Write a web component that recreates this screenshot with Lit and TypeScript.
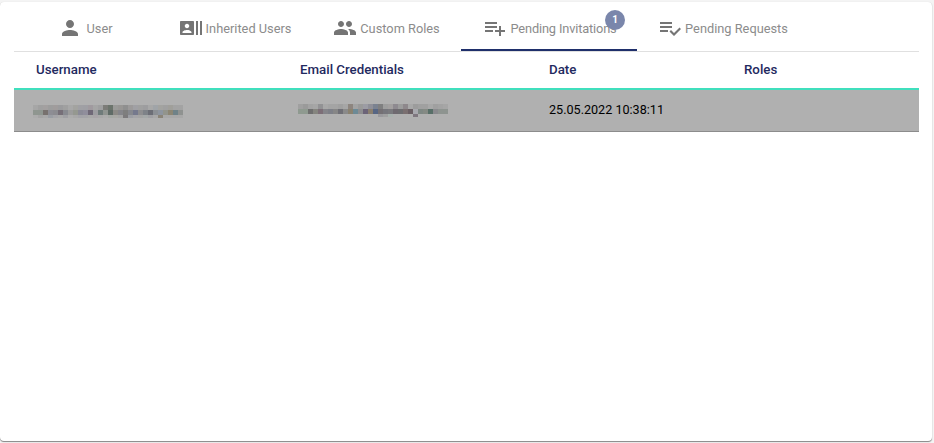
import { LitElement, html, css, svg } from "lit";
import { customElement } from "lit/decorators.js";

const ICONS: Record<string, string> = {
  person: "M12 12c2.21 0 4-1.79 4-4s-1.79-4-4-4-4 1.79-4 4 1.79 4 4 4zm0 2c-2.67 0-8 1.34-8 4v2h16v-2c0-2.66-5.33-4-8-4z",
  actors: "M21 5v14h2V5h-2zm-4 14h2V5h-2v14zM14 5H2c-.55 0-1 .45-1 1v12c0 .55.45 1 1 1h12c.55 0 1-.45 1-1V6c0-.55-.45-1-1-1zM8 7.75c1.24 0 2.25 1.01 2.25 2.25S9.24 12.25 8 12.25 5.75 11.24 5.75 10 6.76 7.75 8 7.75zM12.5 17h-9v-.75c0-1.5 3-2.25 4.5-2.25s4.5.75 4.5 2.25V17z",
  people: "M16 11c1.66 0 2.99-1.34 2.99-3S17.66 5 16 5c-1.66 0-3 1.34-3 3s1.34 3 3 3zm-8 0c1.66 0 2.99-1.34 2.99-3S9.66 5 8 5C6.34 5 5 6.34 5 8s1.34 3 3 3zm0 2c-2.33 0-7 1.17-7 3.5V19h14v-2.5c0-2.33-4.67-3.5-7-3.5zm8 0c-.29 0-.62.02-.97.05 1.16.84 1.97 1.97 1.97 3.45V19h6v-2.5c0-2.33-4.67-3.5-7-3.5z",
  add: "M14 10H2v2h12v-2zm0-4H2v2h12V6zm4 8v-4h-2v4h-4v2h4v4h2v-4h4v-2h-4zM2 16h8v-2H2v2z",
  check: "M14 10H2v2h12v-2zm0-4H2v2h12V6zM2 16h8v-2H2v2zm19.5-4.5L23 13l-6.99 7-4.51-4.5L13 14l3.01 3 5.49-5.5z",
};

const TABS = [
  { icon: "person", label: "User", cls: "t-user" },
  { icon: "actors", label: "Inherited Users", cls: "t-inh" },
  { icon: "people", label: "Custom Roles", cls: "t-cus" },
  { icon: "add", label: "Pending Invitations", cls: "t-inv", active: true, badge: "1" },
  { icon: "check", label: "Pending Requests", cls: "t-req" },
];

const NAME_BLUR = [
  "a6a6a6 a0a0a0 a3a0a0 9d9d9d a09c9c 9b9b9d a0a0a0 a8a8a8 a3a3a0 a0a0a4 9f9fa4 a09a9f a5a5a5 9f9fa0 7c7c78 6c746c 9a9a98 989694 8f8f8f 9c9a9a a0a0a4 a0a0a0 9d9d9f a8a8a8 a0a4a8 a3a3a0 a0a0a0 a09f9a a3a3a3 a3a3a3",
  "8f9690 8f9690 77716e 8d8d94 8b8b90 766f78 888a90 9c9c9c 959890 8b8b97 908e9c 6f6877 9c9ca0 6f7b7a 8f9490 5f6b66 8c8a86 85858a 7e7e7e 86888e 75798d 8e8e90 7e8288 6c6e76 8b8f94 8e959f 92948c 8c8674 6f8288 8f9290",
  "acacac a4a4a4 a8a8a8 9a9ea4 a4a4a8 a8a8a8 a0a0a4 acacac a8a8a8 a3a3a8 a4a4a8 a8a8a8 a8a4a8 a8a8a8 acacac a4a8a4 a8a8a4 a4a4a4 7c7a7c 9c9ea4 a4a4a8 a4a4a4 a4a8a8 a0a0a4 a8a8a8 8a8478 a8a8a8 a8a8a8 a8a8a8 a8a8a8",
];
const MAIL_BLUR = [
  "a0a0a0 9a9a9a a3a3a3 a6a6a6 929294 a8a8a8 a4a4a4 a4a4a4 a0a0a0 a6a6a6 8d857f a3a3a3 9a9a9a 9c9ca4 8f8f98 7b8290 7f7f80 9e9e9e a3a0a0 8e8a90 9c9c9c 8e888c a8a8a8 9c9c9c a0a0a0 a0a0a0 a8a8a8 a0a0a0 a3a3a3 a6a6a6",
  "8f9a90 8f9a90 6f6f6f 85857f 7d6f78 85858a 7e8088 868686 6f6f76 8a8a8a 8a8270 6d8a96 8e8e90 6c6478 8a7f6f 576684 747074 76767c 7a7a7e 6f6a70 6d6d70 7a6f70 6a5f64 a8a8ae 7f8884 858a84 586f68 8a8a8e 8e9490 8e9490",
  "- - - - - - - - - - - - - - - - 9a9a9e a0a0a0 a8b2ae - - - - 7f777f - - - - - -",
];

@customElement("app-root")
export class AppRoot extends LitElement {
  static styles = css`
    :host {
      display: block;
      width: 934px;
      height: 443px;
      background: #f4f4f4;
      box-sizing: border-box;
      padding: 2px 2px 2px 0;
      font-family: Roboto, "Liberation Sans", sans-serif;
      overflow: hidden;
    }
    .card {
      height: 439px;
      box-sizing: border-box;
      background: #fff;
      border-radius: 4px;
      padding: 0 13px 0 14px;
      box-shadow: 0 1px 1px rgba(0, 0, 0, 0.45), 0 0 1px rgba(0, 0, 0, 0.12);
    }
    .tabs {
      display: flex;
      height: 50px;
      box-sizing: border-box;
      border-bottom: 1px solid #e0e0e0;
    }
    .tab {
      position: relative;
      display: flex;
      align-items: center;
      justify-content: center;
      gap: 3px;
      height: 49px;
      box-sizing: border-box;
      padding-top: 3px;
      color: #8c8c8c;
      font-size: 12.8px;
      white-space: nowrap;
    }
    .tab svg {
      width: 24px;
      height: 24px;
      fill: #757575;
      flex: none;
    }
    .t-user { width: 144px; gap: 4px; padding-right: 1px; }
    .t-inh { width: 154px; }
    .t-cus { width: 149px; }
    .t-inv { width: 176px; padding-left: 2px; letter-spacing: -0.15px; }
    .t-req { width: 176px; padding-right: 4px; }
    .active {
      border-bottom: 2px solid #1f2f6b;
      padding-top: 5px;
    }
    .badge {
      position: absolute;
      top: 8px;
      left: 144px;
      width: 20px;
      height: 20px;
      box-sizing: border-box;
      padding-bottom: 1px;
      border-radius: 50%;
      background: #7a86ab;
      color: #fff;
      font-size: 10px;
      font-weight: 700;
      display: flex;
      align-items: center;
      justify-content: center;
    }
    .grid {
      display: grid;
      grid-template-columns: 264px 249px 195px 1fr;
      align-items: center;
      box-sizing: border-box;
      padding-left: 22px;
    }
    .head {
      height: 38px;
      padding-bottom: 2px;
      border-bottom: 2px solid #40dfbd;
      color: #1f2a60;
      font-size: 13.3px;
      font-weight: 500;
    }
    .row {
      height: 42px;
      background: #b0b0b0;
      border-bottom: 1px solid #8c8c8c;
      color: #000;
      font-size: 12.6px;
      padding-bottom: 2px;
    }
    .blur {
      display: block;
      margin: 11px 0 0 -3px;
      width: 150px;
      height: 20px;
    }
    .blur.mail {
      margin: 9px 0 0 -2px;
    }
  `;

  private blur(rows: string[], cls: string) {
    const cells = rows.flatMap((r, y) =>
      r.split(" ").map((c, x) =>
        c === "-"
          ? svg``
          : svg`<rect x=${x * 5} y=${y * 5} width="5" height=${y === 2 ? 3 : 5} fill=${"#" + c}></rect>`
      )
    );
    return html`<svg class=${cls} viewBox="0 0 150 20">${cells}</svg>`;
  }

  render() {
    return html`
      <div class="card">
        <div class="tabs">
          ${TABS.map(
            (t) => html`
              <div class="tab ${t.cls} ${t.active ? "active" : ""}">
                <svg viewBox="0 0 24 24"><path d=${ICONS[t.icon]}></path></svg>
                <span>${t.label}</span>
                ${t.badge ? html`<span class="badge">${t.badge}</span>` : ""}
              </div>
            `
          )}
        </div>
        <div class="grid head">
          <div>Username</div>
          <div>Email Credentials</div>
          <div>Date</div>
          <div>Roles</div>
        </div>
        <div class="grid row">
          <div>${this.blur(NAME_BLUR, "blur")}</div>
          <div>${this.blur(MAIL_BLUR, "blur mail")}</div>
          <div>25.05.2022 10:38:11</div>
          <div></div>
        </div>
      </div>
    `;
  }
}
